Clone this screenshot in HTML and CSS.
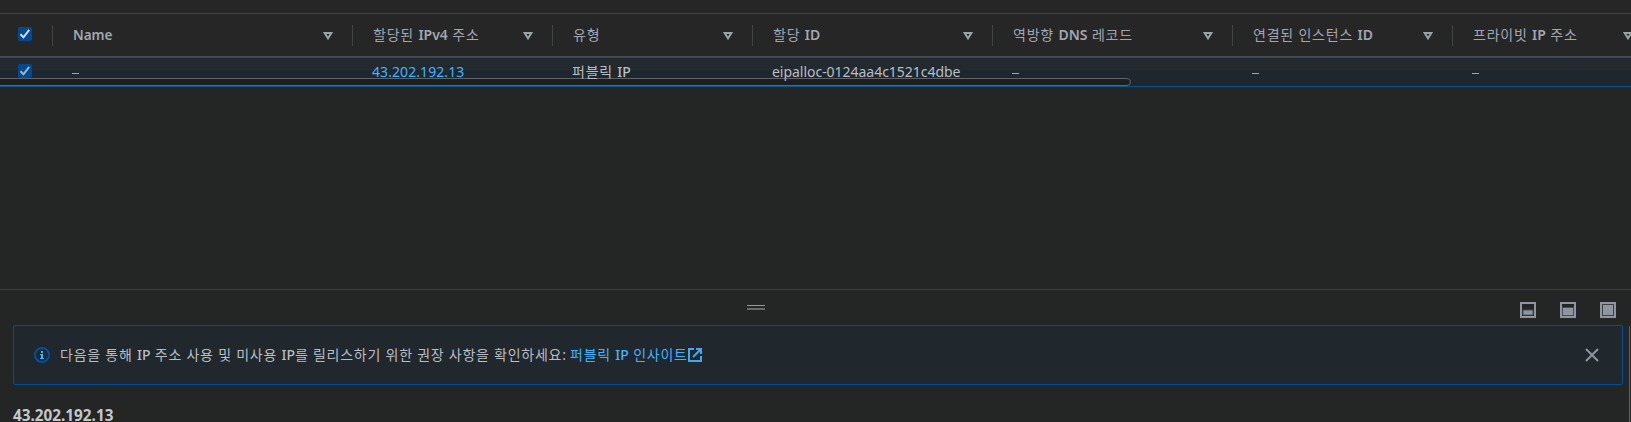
FILE: index.html
```html
<!DOCTYPE html>
<html lang="ko">
<head>
<meta charset="utf-8">
<title>탄력적 IP 주소</title>
<link rel="stylesheet" href="styles.css">
</head>
<body>
<svg class="defs" width="0" height="0">
  <symbol id="sort" viewBox="0 0 10 8"><path d="M1.7 1h6.6L5 6.3z" fill="none" stroke="#95a5a6" stroke-width="2"/></symbol>
  <symbol id="check" viewBox="0 0 14 14"><path d="M2.5 7.2l3 3.1 5.7-7.4" fill="none" stroke="currentColor" stroke-width="2"/></symbol>
</svg>
<section class="table">
  <div class="row head">
    <div class="cell"><span class="checkbox"><svg width="14" height="14"><use href="#check"/></svg></span></div>
    <div class="cell"><span class="label">Name</span><svg class="sort"><use href="#sort"/></svg></div>
    <div class="cell"><span class="label">할당된 <b>IPv4</b> 주소</span><svg class="sort"><use href="#sort"/></svg></div>
    <div class="cell"><span class="label">유형</span><svg class="sort"><use href="#sort"/></svg></div>
    <div class="cell"><span class="label">할당 <b>ID</b></span><svg class="sort"><use href="#sort"/></svg></div>
    <div class="cell"><span class="label">역방향 <b>DNS</b> 레코드</span><svg class="sort"><use href="#sort"/></svg></div>
    <div class="cell"><span class="label">연결된 인스턴스 <b>ID</b></span><svg class="sort"><use href="#sort"/></svg></div>
    <div class="cell"><span class="label">프라이빗 <b>IP</b> 주소</span><svg class="sort"><use href="#sort"/></svg></div>
  </div>
  <div class="row body">
    <div class="scrollbar"></div>
    <div class="cell"><span class="checkbox dim"><svg width="14" height="14"><use href="#check"/></svg></span></div>
    <div class="cell"><i class="dash"></i></div>
    <div class="cell"><a class="ip">43.202.192.13</a></div>
    <div class="cell"><span class="ko">퍼블릭 <b>IP</b></span></div>
    <div class="cell"><span class="alloc">eipalloc-0124aa4c1521c4dbe</span></div>
    <div class="cell"><i class="dash"></i></div>
    <div class="cell"><i class="dash"></i></div>
    <div class="cell"><i class="dash"></i></div>
  </div>
</section>
<section class="panel">
  <div class="toolbar">
    <div class="handle"></div>
    <div class="sizes">
      <svg width="16" height="16"><path d="M1 1h14v14H1z" fill="none" stroke="#8d96a1" stroke-width="2"/><path d="M3 8h10v5H3z" fill="#8d96a1" stroke="#4a4f54"/></svg>
      <svg width="16" height="16"><path d="M1 1h14v14H1z" fill="none" stroke="#8d96a1" stroke-width="2"/><path d="M2.5 5.5h11v8h-11z" fill="#8d96a1" stroke="#4a4f54"/></svg>
      <svg width="16" height="16"><path d="M1 1h14v14H1z" fill="none" stroke="#8d96a1" stroke-width="2"/><path d="M2.5 2.5h11v11h-11z" fill="#8d96a1" stroke="#3e4347"/></svg>
    </div>
  </div>
  <div class="content">
    <div class="alert">
      <svg class="info" width="16" height="16"><circle cx="8" cy="8" r="7" fill="none" stroke="#0050a0" stroke-width="2"/><path d="M7 4h2v2H7zM6 7h3v4h1v1H6v-1h1V8H6z" fill="#42b4ff"/></svg>
      <span class="message">다음을 통해 <b>IP</b> 주소 사용 및 미사용 <b>IP</b>를 릴리스하기 위한 권장 사항을 확인하세요:</span>
      <a class="link">퍼블릭 <b>IP</b> 인사이트</a>
      <svg class="external" width="14" height="14"><path d="M6 1H1v12h12V8M8 1h5v5M13 1L5 9" fill="none" stroke="#42a9f0" stroke-width="2"/></svg>
      <svg class="close" width="14" height="14"><path d="M1 1l12 12M13 1L1 13" stroke="#8d96a1" stroke-width="2"/></svg>
    </div>
    <h2 class="title">43.202.192.13</h2>
  </div>
  <div class="rail"></div>
</section>
</body>
</html>
```
FILE: styles.css
```css
* { box-sizing: border-box; }
body {
  margin: 0;
  height: 422px;
  overflow: hidden;
  display: flex;
  flex-direction: column;
  background: #242625;
  color: #b8bec4;
  font: 14px/20px "Noto Sans", "Noto Sans CJK KR", sans-serif;
}
svg { display: block; flex: none; }
b { font-weight: 500; letter-spacing: 0; }
.defs { position: absolute; }
.table { flex: none; height: 289px; padding-top: 13px; background: #242625; box-shadow: inset 0 13px #262626; }
.row { display: grid; grid-template-columns: 53px 300px 200px 200px 240px 240px 220px 200px; }
.head { height: 44px; background: #262626; border-top: 1px solid #414445; border-bottom: 1px solid #414d53; color: #a1a6b2; }
.head .cell { display: flex; align-items: center; height: 21px; margin-top: 11px; padding: 0 19px 0 20px; border-right: 1px solid #414445; }
.head .cell:first-child, .body .cell:first-child { padding: 0 0 0 18px; }
.head .cell:first-child .checkbox { margin-top: -3px; }
.label { flex: 1; padding-bottom: 2px; letter-spacing: .78px; white-space: nowrap; }
.head .cell:nth-child(2) .label { letter-spacing: 0; font-weight: 600; font-size: 13.5px; }
.label b { font-weight: 600; }
.sort { width: 10px; height: 8px; }
.checkbox { display: block; width: 14px; height: 14px; border-radius: 2px; background: #004a94; color: #d5dce0; }
.checkbox.dim { margin-top: 6px; color: #aab3b9; }
.body {
  position: relative;
  height: 30px;
  background: linear-gradient(#22292f 11px, #252c31 11px 12px, #1f272e 12px);
  border-top: 1px solid #075783;
  border-bottom: 1px solid #075783;
}
.body .cell { position: relative; padding: 4px 0 0 19px; white-space: nowrap; }
.body .scrollbar + .cell { padding: 0 0 0 18px; }
.scrollbar { position: absolute; left: -6px; top: 20px; width: 1137px; height: 8px; border: 1px solid #606466; border-radius: 4px; background: #1b1f22; }
.dash { display: block; width: 7px; height: 1px; margin-top: 11px; background: #a1a6a9; }
.ip { color: #42b4ff; letter-spacing: .08px; }
.ko { letter-spacing: .75px; }
.alloc { letter-spacing: -.03px; }
.panel {
  flex: 1;
  display: grid;
  grid-template: 36px 1fr / 1fr 8px;
  border-top: 1px solid #354046;
}
.toolbar { grid-column: 1 / -1; display: grid; grid-template-columns: 747px 18px 1fr; }
.handle { grid-column: 2; height: 5px; margin-top: 15px; background: linear-gradient(#999 1px, #242625 1px 3px, #6a6a6a 3px); }
.sizes { display: flex; justify-content: flex-end; gap: 24px; padding: 12px 15px 0 0; }
.content { padding-left: 13px; min-width: 0; margin-top: -1px; }
.alert { display: flex; align-items: center; height: 60px; padding: 0 23px 0 20px; border: 1px solid #004d99; border-radius: 2px; background: #20272d; }
.message { width: 510px; margin-left: 10px; white-space: nowrap; letter-spacing: .75px; }
.link { width: 117px; color: #42b4ff; white-space: nowrap; letter-spacing: .75px; }
.external { margin-left: 1px; }
.close { margin-left: auto; }
.title { margin: 20px 0 0; font: bold 15.3px/20px "Noto Sans", sans-serif; color: #c3c8cd; }
.rail { margin: 0 1px 0 6px; border-left: 1px solid #626566; border-top-left-radius: 2px; }
```
